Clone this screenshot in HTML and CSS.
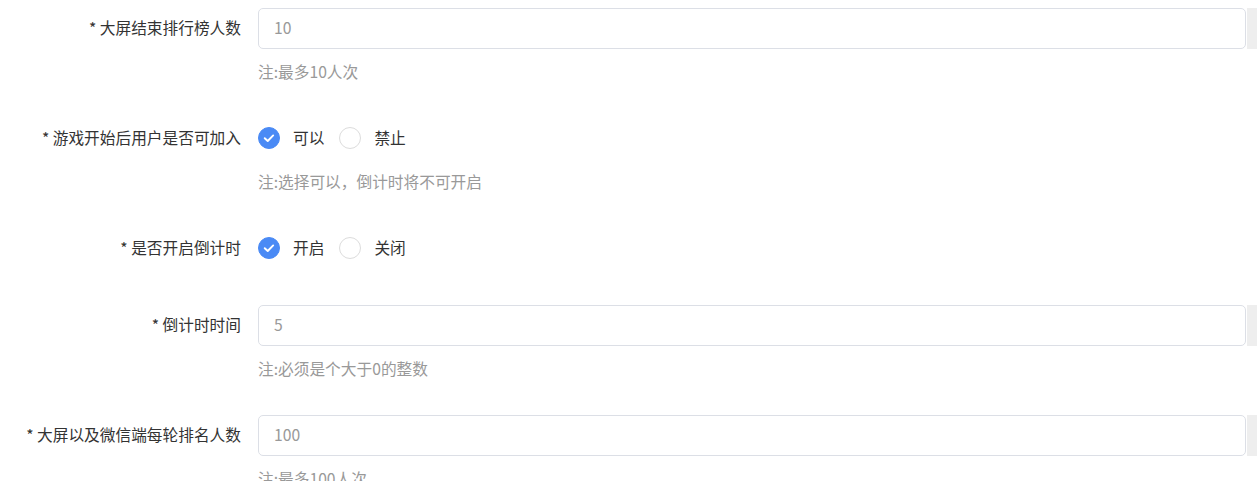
FILE: index.html
```html
<!DOCTYPE html>
<html lang="zh-CN">
<head>
  <meta charset="UTF-8">
  <meta name="viewport" content="width=device-width, initial-scale=1.0">
  <title>游戏设置</title>
  <link rel="stylesheet" href="styles.css">
</head>
<body>
  <form class="settings-form">

    <div class="form-item">
      <div class="form-row">
        <label class="form-label">* 大屏结束排行榜人数</label>
        <div class="form-control">
          <input class="text-input" type="text" value="10">
          <span class="input-addon"></span>
        </div>
      </div>
      <p class="form-note">注:最多10人次</p>
    </div>

    <div class="form-item">
      <div class="form-row">
        <label class="form-label">* 游戏开始后用户是否可加入</label>
        <div class="form-control">
          <span class="radio checked">
            <svg width="22" height="22" viewBox="0 0 22 22"><path d="M6.3 11.2 L9.6 14.3 L15.6 8.2" fill="none" stroke="#fff" stroke-width="2.1" stroke-linecap="round" stroke-linejoin="round"/></svg>
          </span>
          <span class="radio-text">可以</span>
          <span class="radio"></span>
          <span class="radio-text">禁止</span>
        </div>
      </div>
      <p class="form-note">注:选择可以，倒计时将不可开启</p>
    </div>

    <div class="form-item">
      <div class="form-row">
        <label class="form-label">* 是否开启倒计时</label>
        <div class="form-control">
          <span class="radio checked">
            <svg width="22" height="22" viewBox="0 0 22 22"><path d="M6.3 11.2 L9.6 14.3 L15.6 8.2" fill="none" stroke="#fff" stroke-width="2.1" stroke-linecap="round" stroke-linejoin="round"/></svg>
          </span>
          <span class="radio-text">开启</span>
          <span class="radio"></span>
          <span class="radio-text">关闭</span>
        </div>
      </div>
    </div>

    <div class="form-item">
      <div class="form-row">
        <label class="form-label">* 倒计时时间</label>
        <div class="form-control">
          <input class="text-input" type="text" value="5">
          <span class="input-addon"></span>
        </div>
      </div>
      <p class="form-note">注:必须是个大于0的整数</p>
    </div>

    <div class="form-item">
      <div class="form-row">
        <label class="form-label">* 大屏以及微信端每轮排名人数</label>
        <div class="form-control">
          <input class="text-input" type="text" value="100">
          <span class="input-addon"></span>
        </div>
      </div>
      <p class="form-note">注:最多100人次</p>
    </div>

  </form>
</body>
</html>
```

FILE: styles.css
```css
body {
  margin: 0;
  font-family: "Noto Sans CJK SC", "Liberation Sans", sans-serif;
  font-size: 15.7px;
  color: #333;
  background: #fff;
  overflow: hidden;
}

.settings-form {
  padding-top: 8px;
}

.form-item {
  margin-bottom: 36px;
}

.form-row {
  display: flex;
  align-items: center;
  height: 41px;
}

.form-label {
  width: 241px;
  flex-shrink: 0;
  padding-right: 17px;
  padding-bottom: 3px;
  text-align: right;
  white-space: nowrap;
  color: #333;
}

.form-control {
  display: flex;
  align-items: center;
  flex: 1;
  height: 100%;
}

.text-input {
  box-sizing: border-box;
  width: 988px;
  height: 41px;
  padding: 0 15px 2px;
  border: 1px solid #dcdfe6;
  border-radius: 5px;
  font-family: inherit;
  font-size: 15.7px;
  color: #999;
  outline: none;
}

.input-addon {
  width: 40px;
  height: 41px;
  margin-left: 1px;
  background: #eeeeee;
  flex-shrink: 0;
}

.radio {
  box-sizing: border-box;
  width: 22px;
  height: 22px;
  margin-bottom: 2px;
  border: 1px solid #dcdcdc;
  border-radius: 50%;
  display: flex;
  align-items: center;
  justify-content: center;
  flex-shrink: 0;
}

.radio.checked {
  background: #4a8af5;
  border-color: #4a8af5;
}

.radio-text {
  margin-left: 13px;
  margin-right: 15px;
  padding-bottom: 3px;
  color: #333;
}

.form-note {
  margin: 13px 0 0 258px;
  line-height: 20px;
  color: #999;
}
```
